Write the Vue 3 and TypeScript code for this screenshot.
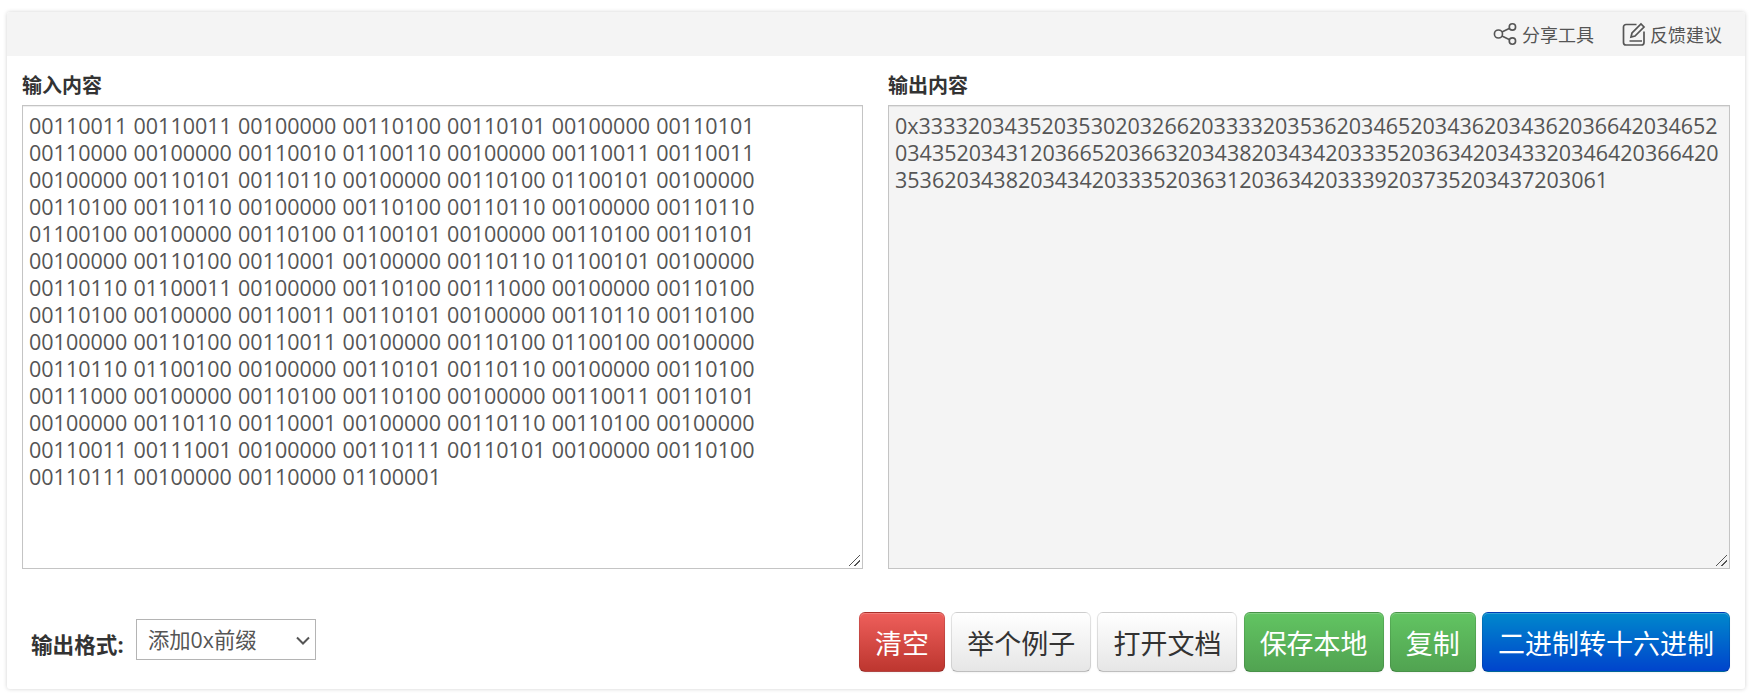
<script setup lang="ts">
const input = "00110011 00110011 00100000 00110100 00110101 00100000 00110101 00110000 00100000 00110010 01100110 00100000 00110011 00110011 00100000 00110101 00110110 00100000 00110100 01100101 00100000 00110100 00110110 00100000 00110100 00110110 00100000 00110110 01100100 00100000 00110100 01100101 00100000 00110100 00110101 00100000 00110100 00110001 00100000 00110110 01100101 00100000 00110110 01100011 00100000 00110100 00111000 00100000 00110100 00110100 00100000 00110011 00110101 00100000 00110110 00110100 00100000 00110100 00110011 00100000 00110100 01100100 00100000 00110110 01100100 00100000 00110101 00110110 00100000 00110100 00111000 00100000 00110100 00110100 00100000 00110011 00110101 00100000 00110110 00110001 00100000 00110110 00110100 00100000 00110011 00111001 00100000 00110111 00110101 00100000 00110100 00110111 00100000 00110000 01100001"
const output = "0x333320343520353020326620333320353620346520343620343620366420346520343520343120366520366320343820343420333520363420343320346420366420353620343820343420333520363120363420333920373520343720" + "3061"
</script>

<template>
  <div class="page">
    <div class="card">
      <div class="topbar">
        <a class="tool share">
          <svg width="24" height="24" viewBox="0 0 22 22" fill="none" stroke="#555" stroke-width="1.5">
            <circle cx="5" cy="11" r="3.7" /><circle cx="17.800" cy="4.500" r="2.900" /><circle cx="17.800" cy="17.500" r="2.900" />
            <path d="M8.200 9.200 15.300 5.800M8.200 12.800l7.100 3.400" />
          </svg>
          分享工具
        </a>
        <a class="tool">
          <svg width="24" height="24" viewBox="0 0 24 24" fill="none" stroke="#555" stroke-width="1.7">
            <path d="M14.500 2.500H4a2.500 2.500 0 0 0-2.500 2.500v15.500a2.500 2.500 0 0 0 2.500 2.500h15.500a2.500 2.500 0 0 0 2.500-2.500V9.500" />
            <path d="M9 15l1-4 9-9 3 3-9 9zM7.500 19h12.500" />
          </svg>
          反馈建议
        </a>
      </div>
      <div class="body">
        <div class="panes">
          <div class="pane">
            <label class="heading">输入内容</label>
            <textarea class="area input" :value="input"></textarea>
          </div>
          <div class="pane">
            <label class="heading">输出内容</label>
            <textarea class="area output" readonly :value="output"></textarea>
          </div>
        </div>
        <div class="controls">
          <div class="format">
            <span class="format-label">输出格式:</span>
            <div class="select-wrap">
              <select class="select"><option>添加0x前缀</option></select>
              <svg class="chevron" width="14" height="9" viewBox="0 0 14 9" fill="none" stroke="#555" stroke-width="2">
                <path d="M1 1.500l6 6 6-6" />
              </svg>
            </div>
          </div>
          <div class="buttons">
            <button class="btn red">清空</button>
            <button class="btn gray">举个例子</button>
            <button class="btn gray">打开文档</button>
            <button class="btn green">保存本地</button>
            <button class="btn green">复制</button>
            <button class="btn blue">二进制转十六进制</button>
          </div>
        </div>
      </div>
    </div>
  </div>
</template>

<style>
html, body { background: #fff; }
</style>

<style scoped>
.page {
  padding: 12px 6px 6px 7px;
  font-family: "Open Sans", "Noto Sans CJK SC", sans-serif;
  color: #333;
}
.card {
  background: #fff;
  border-radius: 3px;
  box-shadow: 0 0 4px rgba(0, 0, 0, 0.18);
}
.topbar {
  height: 44px;
  background: #f4f4f4;
  display: flex;
  justify-content: flex-end;
  align-items: center;
  gap: 28px;
  padding-right: 23px;
  border-radius: 3px 3px 0 0;
}
.tool {
  display: flex;
  align-items: center;
  gap: 4px;
  font-size: 18px;
  color: #555;
}
.tool.share { gap: 5px; }
.body { padding: 16px 15px 17px 15px; }
.panes {
  display: grid;
  grid-template-columns: 841px 842px;
  gap: 25px;
}
.heading {
  display: block;
  font-size: 20px;
  font-weight: 700;
  line-height: 28px;
  height: 33px;
}
.area {
  display: block;
  width: 100%;
  height: 464px;
  box-sizing: border-box;
  border: 1px solid #c4c4c4;
  border-radius: 0;
  box-shadow: inset 0 1px 1px rgba(0, 0, 0, 0.075);
  padding: 6px 10px 6px 6px;
  font-family: inherit;
  font-size: 21.5px;
  line-height: 27px;
  color: #555;
  background: #fff;
  outline: none;
}
.input { word-spacing: 0.6px; }
.area::-webkit-resizer {
  background: linear-gradient(135deg, transparent 52%, #555 52%, #555 58%, transparent 58%, transparent 74%, #555 74%, #555 80%, transparent 80%) no-repeat right 2px bottom 2px / 12px 12px;
}
.output { background: #f4f4f4; }
.controls {
  margin-top: 43px;
  display: flex;
  justify-content: space-between;
  align-items: flex-start;
}
.format {
  display: flex;
  align-items: center;
  padding: 7px 0 0 9px;
}
.format-label {
  font-size: 21.6px;
  font-weight: 700;
  width: 105px;
  white-space: nowrap;
  line-height: 30px;
  padding-top: 10px;
}
.select-wrap { position: relative; }
.select {
  display: block;
  width: 180px;
  height: 41px;
  box-sizing: border-box;
  appearance: none;
  border: 1px solid #b4b4b4;
  border-radius: 0;
  background: #fff;
  padding: 0 0 0 11px;
  font-family: inherit;
  font-size: 21.3px;
  color: #555;
}
.chevron {
  position: absolute;
  right: 6px;
  top: 17px;
}
.buttons { display: flex; gap: 6.2px; }
.btn {
  height: 60px;
  box-sizing: border-box;
  border-radius: 6px;
  border: 1px solid;
  border-color: rgba(0, 0, 0, 0.1) rgba(0, 0, 0, 0.1) rgba(0, 0, 0, 0.25);
  box-shadow: inset 0 1px 0 rgba(255, 255, 255, 0.2), 0 1px 2px rgba(0, 0, 0, 0.05);
  padding: 0 15px;
  font-family: inherit;
  font-size: 27px;
  color: #fff;
  white-space: nowrap;
}
.red { background: linear-gradient(#ee5f5b, #bd362f); }
.gray { background: linear-gradient(#fff, #e6e6e6); color: #333; }
.green { background: linear-gradient(#62c462, #51a351); }
.blue { background: linear-gradient(#0088cc, #0044cc); }
</style>
